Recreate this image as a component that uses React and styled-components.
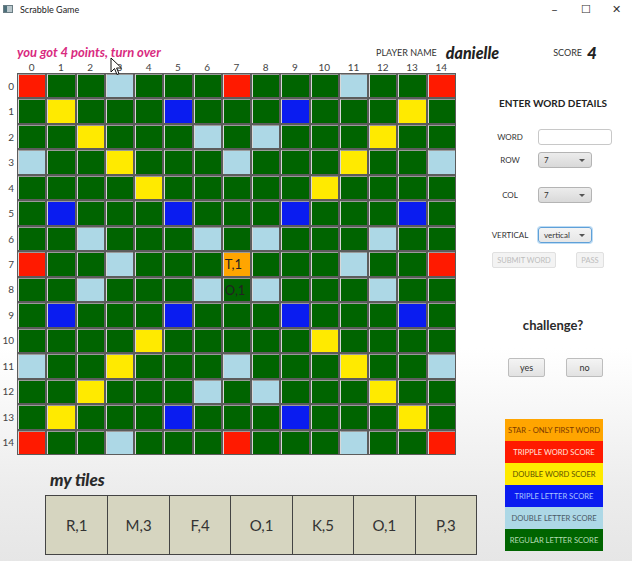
import React from "react";
import styled, { createGlobalStyle } from "styled-components";

const Global = createGlobalStyle`
  html, body { margin: 0; padding: 0; }
  body { font-family: "Lato", "Open Sans", sans-serif; color: #333; }
  * { box-sizing: border-box; }
`;

const Window = styled.div`
  position: relative;
  width: 632px;
  height: 561px;
  overflow: hidden;
  display: flex;
  flex-direction: column;
  background: linear-gradient(to bottom, #ffffff 0%, #ffffff 62%, #ececec 88%, #e6e6e6 100%);
`;

const TitleBar = styled.div`
  height: 18px;
  display: flex;
  align-items: center;
  padding-left: 3px;
  background: #fff;
  font-size: 9px;
  color: #222;
`;

const AppIcon = styled.span`
  width: 10px;
  height: 8px;
  margin-right: 7px;
  background: linear-gradient(to right, #4d6f7a 0 40%, #b9c7cc 40% 100%);
  border: 1px solid #6a7d84;
`;

const TitleText = styled.span`
  flex: 1;
`;

const WinButton = styled.span`
  width: 31px;
  text-align: center;
  font-size: ${(p) => p.$size || 11}px;
  color: #333;
`;

const HeaderRow = styled.div`
  margin-top: 25px;
  height: 18px;
  display: flex;
  align-items: center;
  padding-left: 17px;
`;

const Message = styled.div`
  font-weight: 700;
  font-style: italic;
  font-size: 13px;
  color: #d92b7f;
  width: 359px;
`;

const SmallLabel = styled.span`
  font-size: 9px;
  color: #333;
  text-transform: uppercase;
  margin-right: ${(p) => p.$mr || 0}px;
`;

const BigValue = styled.span`
  font-weight: 900;
  font-style: italic;
  font-size: ${(p) => p.$size || 16}px;
  color: #222;
  margin-right: ${(p) => p.$mr || 0}px;
`;

const Main = styled.div`
  display: flex;
`;

const LeftColumn = styled.div`
  width: 478px;
  display: flex;
  flex-direction: column;
`;

const ColLabels = styled.div`
  margin-left: 17px;
  width: 439px;
  height: 12px;
  display: grid;
  grid-template-columns: repeat(15, 1fr);
  font-size: 10px;
  line-height: 12px;
  color: #444;
  text-align: center;
`;

const BoardArea = styled.div`
  display: flex;
`;

const RowLabels = styled.div`
  width: 17px;
  height: 382px;
  display: grid;
  grid-template-rows: repeat(15, 1fr);
  font-size: 10px;
  color: #444;
  text-align: right;
  padding-right: 3px;
`;

const RowLabel = styled.div`
  display: flex;
  align-items: center;
  justify-content: flex-end;
`;

const Board = styled.div`
  width: 439px;
  height: 382px;
  display: grid;
  grid-template-columns: repeat(15, 1fr);
  grid-template-rows: repeat(15, 1fr);
  gap: 2px;
  padding: 1px;
  background: #5c5c5c;
`;

const cellColors = {
  tw: "#ff1a00",
  dw: "#ffea00",
  tl: "#0a1cf0",
  dl: "#add8e6",
  star: "#ffa500",
  n: "#006400",
};

const Cell = styled.div`
  background: ${(p) => cellColors[p.$type]};
  border-left: 1px solid #d8d8d8;
  border-top: 1px solid #9a9a9a;
  display: flex;
  align-items: center;
  font-size: 13px;
  color: #222;
  padding-left: 1px;
  white-space: nowrap;
`;

const TilesTitle = styled.div`
  margin: 14px 0 0 50px;
  height: 20px;
  font-weight: 900;
  font-style: italic;
  font-size: 17px;
  color: #2a2a2a;
`;

const Tiles = styled.div`
  margin: 6px 0 0 45px;
  width: 432px;
  height: 60px;
  display: grid;
  grid-template-columns: repeat(7, 1fr);
  border: 1px solid #444;
  background: #d6d5c0;
`;

const Tile = styled.div`
  display: flex;
  align-items: center;
  justify-content: center;
  font-size: 15px;
  color: #333;
  border-left: ${(p) => (p.$first ? "none" : "1px solid #444")};
`;

const Panel = styled.div`
  flex: 1;
  display: flex;
  flex-direction: column;
  padding-right: 4px;
`;

const PanelHeading = styled.div`
  margin-top: 36px;
  text-align: center;
  font-weight: 700;
  font-size: 10px;
  line-height: 12px;
  color: #222;
`;

const FormRow = styled.div`
  display: grid;
  grid-template-columns: 40px 1fr;
  column-gap: 8px;
  align-items: center;
  margin-top: ${(p) => p.$mt}px;
  padding-left: 12px;
  height: 16px;
`;

const FieldLabel = styled.div`
  font-size: 8px;
  text-align: center;
  color: #333;
  text-transform: uppercase;
`;

const TextInput = styled.div`
  width: 74px;
  height: 16px;
  background: #fff;
  border: 1px solid #c8c8c8;
  border-radius: 3px;
`;

const Select = styled.div`
  width: 54px;
  height: 16px;
  border-radius: 3px;
  border: 1px solid ${(p) => (p.$focus ? "#5fa0d8" : "#b4b4b4")};
  box-shadow: ${(p) => (p.$focus ? "0 0 0 1px #bcdcf5" : "none")};
  background: ${(p) => (p.$focus ? "linear-gradient(#f4f4f4, #e6e6e6)" : "linear-gradient(#ececec, #d9d9d9)")};
  display: flex;
  align-items: center;
  justify-content: space-between;
  padding: 0 6px 0 5px;
  font-size: 8px;
  color: #333;
`;

const Caret = styled.span`
  width: 0;
  height: 0;
  border-left: 3px solid transparent;
  border-right: 3px solid transparent;
  border-top: 3px solid #555;
`;

const ButtonRow = styled.div`
  display: flex;
  margin-top: ${(p) => p.$mt}px;
  padding-left: ${(p) => p.$pl}px;
  gap: ${(p) => p.$gap}px;
`;

const DisabledButton = styled.div`
  width: ${(p) => p.$w}px;
  height: 16px;
  background: #f3f3f3;
  border: 1px solid #e0e0e0;
  border-radius: 2px;
  display: flex;
  align-items: center;
  justify-content: center;
  font-size: 7.5px;
  color: #bdbdbd;
`;

const Challenge = styled.div`
  margin-top: 49px;
  text-align: center;
  font-weight: 700;
  font-size: 13px;
  line-height: 16px;
  color: #2a2a2a;
`;

const PlainButton = styled.div`
  width: 37px;
  height: 19px;
  background: linear-gradient(#f4f4f4, #e2e2e2);
  border: 1px solid #bdbdbd;
  border-radius: 2px;
  display: flex;
  align-items: center;
  justify-content: center;
  font-size: 9px;
  color: #333;
`;

const Legend = styled.div`
  margin: 42px 0 0 27px;
  width: 98px;
  display: flex;
  flex-direction: column;
`;

const LegendRow = styled.div`
  height: 22px;
  background: ${(p) => p.$bg};
  color: ${(p) => p.$fg};
  font-size: 7.6px;
  display: flex;
  align-items: center;
  justify-content: center;
  white-space: nowrap;
`;

const Cursor = styled.svg`
  position: absolute;
  left: 110px;
  top: 57px;
`;

const TW = [[0,0],[0,7],[0,14],[7,0],[7,14],[14,0],[14,7],[14,14]];
const TL = [[1,5],[1,9],[5,1],[5,5],[5,9],[5,13],[9,1],[9,5],[9,9],[9,13],[13,5],[13,9]];
const DL = [[0,3],[0,11],[2,6],[2,8],[3,0],[3,7],[3,14],[6,2],[6,6],[6,8],[6,12],[7,3],[7,11],[8,2],[8,6],[8,8],[8,12],[11,0],[11,7],[11,14],[12,6],[12,8],[14,3],[14,11]];

function cellType(r, c) {
  const has = (list) => list.some(([a, b]) => a === r && b === c);
  if (r === 7 && c === 7) return "star";
  if (has(TW)) return "tw";
  if (has(TL)) return "tl";
  if (has(DL)) return "dl";
  if ((r === c || r + c === 14) && ((r >= 1 && r <= 4) || (r >= 10 && r <= 13))) return "dw";
  return "n";
}

const letters = { "7-7": "T,1", "8-7": "O,1" };
const idx = Array.from({ length: 15 }, (_, i) => i);
const tiles = ["R,1", "M,3", "F,4", "O,1", "K,5", "O,1", "P,3"];
const legend = [
  ["STAR - ONLY FIRST WORD", "#ffa500", "#7a3a00"],
  ["TRIPPLE WORD SCORE", "#ff1a00", "#ffe3dc"],
  ["DOUBLE WORD SCOER", "#ffea00", "#5e5200"],
  ["TRIPLE LETTER SCORE", "#0a1cf0", "#a9c4ff"],
  ["DOUBLE LETTER SCORE", "#add8e6", "#4a5a66"],
  ["REGULAR LETTER SCORE", "#006400", "#b4dcb4"],
];

export default function App() {
  return (
    <Window>
      <Global />
      <TitleBar>
        <AppIcon />
        <TitleText>Scrabble Game</TitleText>
        <WinButton $size={12}>–</WinButton>
        <WinButton $size={11}>☐</WinButton>
        <WinButton $size={11}>✕</WinButton>
      </TitleBar>
      <HeaderRow>
        <Message>you got 4 points, turn over</Message>
        <SmallLabel $mr={9}>Player Name</SmallLabel>
        <BigValue $mr={54}>danielle</BigValue>
        <SmallLabel $mr={5}>Score</SmallLabel>
        <BigValue $size={17}>4</BigValue>
      </HeaderRow>
      <Main>
        <LeftColumn>
          <ColLabels>
            {idx.map((i) => (
              <span key={i}>{i}</span>
            ))}
          </ColLabels>
          <BoardArea>
            <RowLabels>
              {idx.map((i) => (
                <RowLabel key={i}>{i}</RowLabel>
              ))}
            </RowLabels>
            <Board>
              {idx.map((r) =>
                idx.map((c) => (
                  <Cell key={`${r}-${c}`} $type={cellType(r, c)}>
                    {letters[`${r}-${c}`] || ""}
                  </Cell>
                ))
              )}
            </Board>
          </BoardArea>
          <TilesTitle>my tiles</TilesTitle>
          <Tiles>
            {tiles.map((t, i) => (
              <Tile key={i} $first={i === 0}>{t}</Tile>
            ))}
          </Tiles>
        </LeftColumn>
        <Panel>
          <PanelHeading>ENTER WORD DETAILS</PanelHeading>
          <FormRow $mt={20}>
            <FieldLabel>Word</FieldLabel>
            <TextInput />
          </FormRow>
          <FormRow $mt={7}>
            <FieldLabel>Row</FieldLabel>
            <Select>7<Caret /></Select>
          </FormRow>
          <FormRow $mt={19}>
            <FieldLabel>Col</FieldLabel>
            <Select>7<Caret /></Select>
          </FormRow>
          <FormRow $mt={24}>
            <FieldLabel>Vertical</FieldLabel>
            <Select $focus>vertical<Caret /></Select>
          </FormRow>
          <ButtonRow $mt={9} $pl={14} $gap={20}>
            <DisabledButton $w={64}>SUBMIT WORD</DisabledButton>
            <DisabledButton $w={28}>PASS</DisabledButton>
          </ButtonRow>
          <Challenge>challenge?</Challenge>
          <ButtonRow $mt={25} $pl={30} $gap={21}>
            <PlainButton>yes</PlainButton>
            <PlainButton>no</PlainButton>
          </ButtonRow>
          <Legend>
            {legend.map(([t, bg, fg]) => (
              <LegendRow key={t} $bg={bg} $fg={fg}>{t}</LegendRow>
            ))}
          </Legend>
        </Panel>
      </Main>
      <Cursor width="13" height="19" viewBox="0 0 13 19">
        <path d="M1 1 L1 15 L4.5 11.5 L7 17.5 L9 16.6 L6.6 11 L11.5 11 Z" fill="#fff" stroke="#111" strokeWidth="1" strokeLinejoin="round" />
      </Cursor>
    </Window>
  );
}
